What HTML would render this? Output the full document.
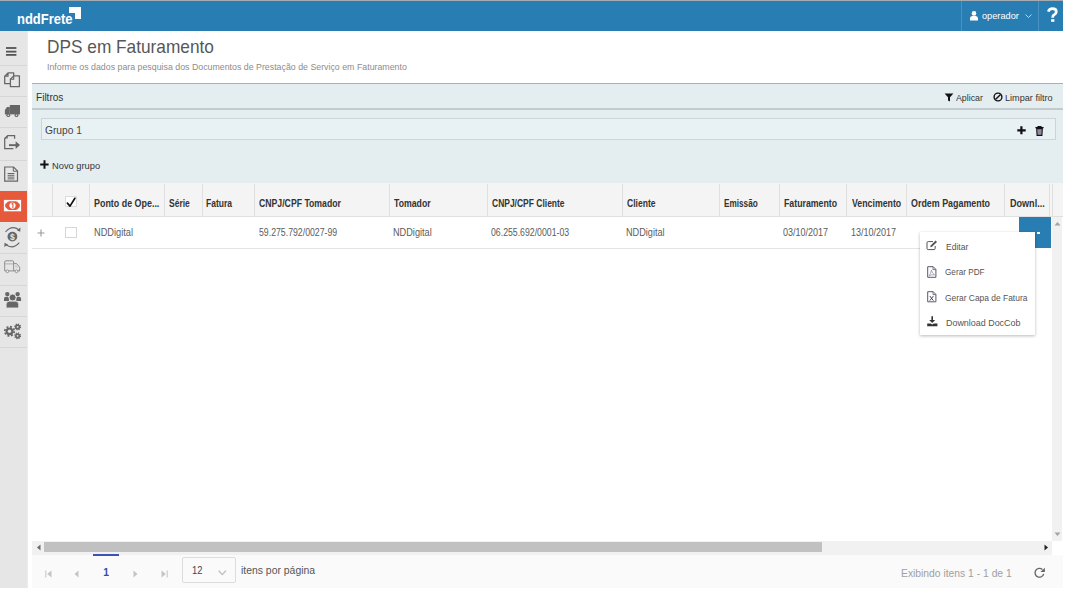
<!DOCTYPE html>
<html><head><meta charset="utf-8"><style>
html,body{margin:0;padding:0;background:#fff;width:1065px;height:592px;overflow:hidden;position:relative;font-family:"Liberation Sans", sans-serif;}
</style></head><body>
<div style="position:absolute;left:0px;top:0px;width:1062.5px;height:1px;background:#a4abb0"></div><div style="position:absolute;left:0px;top:1px;width:1062.5px;height:30px;background:#287db3"></div><div style="position:absolute;left:16.80px;top:11.34px;font-size:15px;line-height:15px;color:#fff;font-weight:700;letter-spacing:0px;white-space:nowrap;transform:scaleX(0.8649);transform-origin:0 0;">nddFrete</div><div style="position:absolute;left:69.4px;top:7.1px;width:5.75px;height:5.5px;background:#fff"></div><div style="position:absolute;left:75.45px;top:7.1px;width:5.55px;height:5.5px;background:#fff"></div><div style="position:absolute;left:75.45px;top:12.9px;width:5.55px;height:6.4px;background:#fff"></div><div style="position:absolute;left:961px;top:1px;width:1px;height:30px;background:#4a92c2"></div><div style="position:absolute;left:1038.3px;top:1px;width:1px;height:30px;background:#4a92c2"></div><svg style="position:absolute;left:969.5px;top:11.2px" width="8" height="9.5" viewBox="0 0 8 9.5"><circle cx="4" cy="2.4" r="2.3" fill="#fff"/><path d="M0 9.5 L0 7.2 Q0 5.2 2.2 5.0 L5.8 5.0 Q8 5.2 8 7.2 L8 9.5 Z" fill="#fff"/></svg><div style="position:absolute;left:982.40px;top:10.66px;font-size:9.8px;line-height:9.8px;color:#fff;font-weight:400;letter-spacing:0px;white-space:nowrap;transform:scaleX(0.9386);transform-origin:0 0;">operador</div><svg style="position:absolute;left:1024.5px;top:13.6px" width="7" height="4.5" viewBox="0 0 7 4.5"><path d="M0.5 0.5 L3.5 3.5 L6.5 0.5" stroke="#cfe0ee" stroke-width="0.9" fill="none"/></svg><svg style="position:absolute;left:1046px;top:7px" width="13" height="15" viewBox="0 0 13 15"><path d="M2.3 4.6 Q3.2 1.7 6.5 1.7 Q10.3 1.7 10.3 4.8 Q10.3 6.8 8.2 7.8 Q6.7 8.6 6.7 10.2 V10.8" fill="none" stroke="#fff" stroke-width="2.7" stroke-linecap="butt"/><rect x="5.1" y="12.2" width="3.3" height="2.6" fill="#fff"/></svg><div style="position:absolute;left:0px;top:31px;width:27.3px;height:556.5px;background:#e6e6e6"></div><div style="position:absolute;left:27.3px;top:31px;width:1px;height:556.5px;background:#ececec"></div><div style="position:absolute;left:0px;top:64.5px;width:27.3px;height:1px;background:#d6d6d6"></div><div style="position:absolute;left:0px;top:96.0px;width:27.3px;height:1px;background:#d6d6d6"></div><div style="position:absolute;left:0px;top:127.0px;width:27.3px;height:1px;background:#d6d6d6"></div><div style="position:absolute;left:0px;top:159.5px;width:27.3px;height:1px;background:#d6d6d6"></div><div style="position:absolute;left:0px;top:252.9px;width:27.3px;height:1px;background:#d6d6d6"></div><div style="position:absolute;left:0px;top:285.0px;width:27.3px;height:1px;background:#d6d6d6"></div><div style="position:absolute;left:0px;top:315.6px;width:27.3px;height:1px;background:#d6d6d6"></div><div style="position:absolute;left:0px;top:347.2px;width:27.3px;height:1px;background:#d6d6d6"></div><div style="position:absolute;left:0px;top:191.2px;width:27.3px;height:30.4px;background:#e65a3b"></div><div style="position:absolute;left:46.95px;top:37.97px;font-size:18.1px;line-height:18.1px;color:#575757;font-weight:400;letter-spacing:0px;white-space:nowrap;transform:scaleX(0.9539);transform-origin:0 0;">DPS em Faturamento</div><div style="position:absolute;left:47.00px;top:62.38px;font-size:9.9px;line-height:9.9px;color:#8c8c8c;font-weight:400;letter-spacing:0px;white-space:nowrap;transform:scaleX(0.8919);transform-origin:0 0;">Informe os dados para pesquisa dos Documentos de Prestação de Serviço em Faturamento</div><div style="position:absolute;left:31.5px;top:82.7px;width:1031.2px;height:100.4px;background:#e4eef1"></div><div style="position:absolute;left:31.5px;top:82.7px;width:1031.2px;height:1.4px;background:#a9aeb1"></div><div style="position:absolute;left:31.5px;top:108.3px;width:1031.2px;height:1.6px;background:#c3cacc"></div><div style="position:absolute;left:35.90px;top:92.76px;font-size:10.4px;line-height:10.4px;color:#333;font-weight:400;letter-spacing:0px;white-space:nowrap;transform:scaleX(0.9683);transform-origin:0 0;">Filtros</div><div style="position:absolute;left:955.80px;top:93.87px;font-size:8.7px;line-height:8.7px;color:#333;font-weight:400;letter-spacing:0px;white-space:nowrap;transform:scaleX(1.0127);transform-origin:0 0;">Aplicar</div><div style="position:absolute;left:1005.40px;top:93.87px;font-size:8.7px;line-height:8.7px;color:#333;font-weight:400;letter-spacing:0px;white-space:nowrap;transform:scaleX(1.0494);transform-origin:0 0;">Limpar filtro</div><div style="position:absolute;left:40.5px;top:118.4px;width:1015.2px;height:22px;background:#e8f1f4;border:1px solid #cdd3d6;box-sizing:border-box"></div><div style="position:absolute;left:45.10px;top:125.06px;font-size:11px;line-height:11px;color:#444;font-weight:400;letter-spacing:0px;white-space:nowrap;transform:scaleX(0.9286);transform-origin:0 0;">Grupo 1</div><div style="position:absolute;left:51.70px;top:160.74px;font-size:9.7px;line-height:9.7px;color:#333;font-weight:400;letter-spacing:0px;white-space:nowrap;transform:scaleX(0.9598);transform-origin:0 0;">Novo grupo</div><div style="position:absolute;left:31.5px;top:183.1px;width:1031px;height:33px;background:#f4f4f4"></div><div style="position:absolute;left:31.5px;top:215.6px;width:1031px;height:1px;background:#e0e0e0"></div><div style="position:absolute;left:51.9px;top:184px;width:1px;height:31.6px;background:#e0e0e0"></div><div style="position:absolute;left:89.0px;top:184px;width:1px;height:31.6px;background:#e0e0e0"></div><div style="position:absolute;left:163.9px;top:184px;width:1px;height:31.6px;background:#e0e0e0"></div><div style="position:absolute;left:201.9px;top:184px;width:1px;height:31.6px;background:#e0e0e0"></div><div style="position:absolute;left:253.8px;top:184px;width:1px;height:31.6px;background:#e0e0e0"></div><div style="position:absolute;left:389.0px;top:184px;width:1px;height:31.6px;background:#e0e0e0"></div><div style="position:absolute;left:487.0px;top:184px;width:1px;height:31.6px;background:#e0e0e0"></div><div style="position:absolute;left:621.8px;top:184px;width:1px;height:31.6px;background:#e0e0e0"></div><div style="position:absolute;left:718.9px;top:184px;width:1px;height:31.6px;background:#e0e0e0"></div><div style="position:absolute;left:779.0px;top:184px;width:1px;height:31.6px;background:#e0e0e0"></div><div style="position:absolute;left:846.3px;top:184px;width:1px;height:31.6px;background:#e0e0e0"></div><div style="position:absolute;left:905.9px;top:184px;width:1px;height:31.6px;background:#e0e0e0"></div><div style="position:absolute;left:1004.2px;top:184px;width:1px;height:31.6px;background:#e0e0e0"></div><div style="position:absolute;left:1049.3px;top:184px;width:1px;height:31.6px;background:#e0e0e0"></div><div style="position:absolute;left:1052.1px;top:184px;width:1px;height:31.6px;background:#e0e0e0"></div><div style="position:absolute;left:94.40px;top:198.61px;font-size:10.1px;line-height:10.1px;color:#333;font-weight:700;letter-spacing:0px;white-space:nowrap;transform:scaleX(0.8825);transform-origin:0 0;">Ponto de Ope...</div><div style="position:absolute;left:168.70px;top:198.61px;font-size:10.1px;line-height:10.1px;color:#333;font-weight:700;letter-spacing:0px;white-space:nowrap;transform:scaleX(0.8414);transform-origin:0 0;">Série</div><div style="position:absolute;left:206.30px;top:198.61px;font-size:10.1px;line-height:10.1px;color:#333;font-weight:700;letter-spacing:0px;white-space:nowrap;transform:scaleX(0.8452);transform-origin:0 0;">Fatura</div><div style="position:absolute;left:258.60px;top:198.61px;font-size:10.1px;line-height:10.1px;color:#333;font-weight:700;letter-spacing:0px;white-space:nowrap;transform:scaleX(0.8611);transform-origin:0 0;">CNPJ/CPF Tomador</div><div style="position:absolute;left:394.40px;top:198.61px;font-size:10.1px;line-height:10.1px;color:#333;font-weight:700;letter-spacing:0px;white-space:nowrap;transform:scaleX(0.8635);transform-origin:0 0;">Tomador</div><div style="position:absolute;left:491.80px;top:198.61px;font-size:10.1px;line-height:10.1px;color:#333;font-weight:700;letter-spacing:0px;white-space:nowrap;transform:scaleX(0.8403);transform-origin:0 0;">CNPJ/CPF Cliente</div><div style="position:absolute;left:626.60px;top:198.61px;font-size:10.1px;line-height:10.1px;color:#333;font-weight:700;letter-spacing:0px;white-space:nowrap;transform:scaleX(0.8461);transform-origin:0 0;">Cliente</div><div style="position:absolute;left:724.00px;top:198.61px;font-size:10.1px;line-height:10.1px;color:#333;font-weight:700;letter-spacing:0px;white-space:nowrap;transform:scaleX(0.8125);transform-origin:0 0;">Emissão</div><div style="position:absolute;left:784.00px;top:198.61px;font-size:10.1px;line-height:10.1px;color:#333;font-weight:700;letter-spacing:0px;white-space:nowrap;transform:scaleX(0.8694);transform-origin:0 0;">Faturamento</div><div style="position:absolute;left:851.50px;top:198.61px;font-size:10.1px;line-height:10.1px;color:#333;font-weight:700;letter-spacing:0px;white-space:nowrap;transform:scaleX(0.8674);transform-origin:0 0;">Vencimento</div><div style="position:absolute;left:911.40px;top:198.61px;font-size:10.1px;line-height:10.1px;color:#333;font-weight:700;letter-spacing:0px;white-space:nowrap;transform:scaleX(0.8808);transform-origin:0 0;">Ordem Pagamento</div><div style="position:absolute;left:1009.50px;top:198.61px;font-size:10.1px;line-height:10.1px;color:#333;font-weight:700;letter-spacing:0px;white-space:nowrap;transform:scaleX(0.8975);transform-origin:0 0;">Downl...</div><div style="position:absolute;left:65.2px;top:196.4px;width:11.4px;height:10.7px;background:#fff;border:1px solid #dcdcdc;box-sizing:border-box"></div><svg style="position:absolute;left:65px;top:196px" width="12" height="12" viewBox="0 0 12 12"><path d="M2.4 7.1 L5.0 10.1 L9.9 2.3" stroke="#111" stroke-width="1.7" fill="none" stroke-linecap="round" stroke-linejoin="round"/></svg><div style="position:absolute;left:31.5px;top:247.6px;width:989px;height:1px;background:#e4e4e4"></div><svg style="position:absolute;left:37.3px;top:228.5px" width="8" height="8" viewBox="0 0 8 8"><path d="M4 0.5 V7.5 M0.5 4 H7.5" stroke="#9a9a9a" stroke-width="1.1"/></svg><div style="position:absolute;left:65.2px;top:226.7px;width:11.5px;height:11.3px;background:#fff;border:1px solid #d6d6d6;box-sizing:border-box"></div><div style="position:absolute;left:93.70px;top:226.80px;font-size:10.6px;line-height:10.6px;color:#5c5c5c;font-weight:400;letter-spacing:0px;white-space:nowrap;transform:scaleX(0.8719);transform-origin:0 0;">NDDigital</div><div style="position:absolute;left:258.60px;top:226.80px;font-size:10.6px;line-height:10.6px;color:#5c5c5c;font-weight:400;letter-spacing:0px;white-space:nowrap;transform:scaleX(0.8246);transform-origin:0 0;">59.275.792/0027-99</div><div style="position:absolute;left:393.40px;top:226.80px;font-size:10.6px;line-height:10.6px;color:#5c5c5c;font-weight:400;letter-spacing:0px;white-space:nowrap;transform:scaleX(0.8652);transform-origin:0 0;">NDDigital</div><div style="position:absolute;left:490.90px;top:226.80px;font-size:10.6px;line-height:10.6px;color:#5c5c5c;font-weight:400;letter-spacing:0px;white-space:nowrap;transform:scaleX(0.8236);transform-origin:0 0;">06.255.692/0001-03</div><div style="position:absolute;left:626.00px;top:226.80px;font-size:10.6px;line-height:10.6px;color:#5c5c5c;font-weight:400;letter-spacing:0px;white-space:nowrap;transform:scaleX(0.8629);transform-origin:0 0;">NDDigital</div><div style="position:absolute;left:783.30px;top:226.80px;font-size:10.6px;line-height:10.6px;color:#5c5c5c;font-weight:400;letter-spacing:0px;white-space:nowrap;transform:scaleX(0.8508);transform-origin:0 0;">03/10/2017</div><div style="position:absolute;left:850.80px;top:226.80px;font-size:10.6px;line-height:10.6px;color:#5c5c5c;font-weight:400;letter-spacing:0px;white-space:nowrap;transform:scaleX(0.8508);transform-origin:0 0;">13/10/2017</div><div style="position:absolute;left:1018.5px;top:216.6px;width:32.6px;height:31.6px;background:#287db3"></div><div style="position:absolute;left:1052.3px;top:216.5px;width:9.6px;height:324.1px;background:#f1f1f1"></div><svg style="position:absolute;left:1054.3px;top:220.6px" width="7" height="5" viewBox="0 0 7 5"><path d="M0.5 4.5 L3.5 1 L6.5 4.5 Z" fill="#a3a3a3"/></svg><svg style="position:absolute;left:1054.3px;top:532px" width="7" height="5" viewBox="0 0 7 5"><path d="M0.5 0.5 L3.5 4 L6.5 0.5 Z" fill="#a3a3a3"/></svg><div style="position:absolute;left:31.5px;top:541.3px;width:1020.5px;height:13.3px;background:#f1f1f1"></div><div style="position:absolute;left:44.3px;top:542.4px;width:777.8px;height:9.6px;background:#c1c1c1"></div><svg style="position:absolute;left:35.5px;top:543.5px" width="5" height="7" viewBox="0 0 5 7"><path d="M4.5 0.5 L1 3.5 L4.5 6.5 Z" fill="#6b6b6b"/></svg><svg style="position:absolute;left:1044px;top:543.5px" width="5" height="7" viewBox="0 0 5 7"><path d="M0.5 0.5 L4 3.5 L0.5 6.5 Z" fill="#222"/></svg><div style="position:absolute;left:31.5px;top:554.6px;width:1031.2px;height:33px;background:#fafafa"></div><div style="position:absolute;left:93px;top:554.4px;width:25.7px;height:1.6px;background:#3f51b5"></div><div style="position:absolute;left:103.30px;top:568.25px;font-size:10.3px;line-height:10.3px;color:#3349b0;font-weight:700;letter-spacing:0px;white-space:nowrap;">1</div><svg style="position:absolute;left:45px;top:569.7px" width="7" height="8" viewBox="0 0 7 8"><path d="M0.8 0.5 V7.5" stroke="#c4c4c4" stroke-width="1"/><path d="M6.5 0.5 L2.2 4 L6.5 7.5 Z" fill="#c4c4c4"/></svg><svg style="position:absolute;left:73.5px;top:569.7px" width="5" height="8" viewBox="0 0 5 8"><path d="M4.5 0.5 L0.5 4 L4.5 7.5 Z" fill="#c4c4c4"/></svg><svg style="position:absolute;left:132.5px;top:569.7px" width="5" height="8" viewBox="0 0 5 8"><path d="M0.5 0.5 L4.5 4 L0.5 7.5 Z" fill="#c4c4c4"/></svg><svg style="position:absolute;left:160.5px;top:569.7px" width="7" height="8" viewBox="0 0 7 8"><path d="M0.5 0.5 L4.8 4 L0.5 7.5 Z" fill="#c4c4c4"/><path d="M6.2 0.5 V7.5" stroke="#c4c4c4" stroke-width="1"/></svg><div style="position:absolute;left:181.5px;top:557.4px;width:54.5px;height:26px;background:#fafafa;border:1px solid #dcdcdc;border-radius:2px;box-sizing:border-box"></div><div style="position:absolute;left:192.00px;top:565.73px;font-size:10.2px;line-height:10.2px;color:#444;font-weight:400;letter-spacing:0px;white-space:nowrap;transform:scaleX(0.9172);transform-origin:0 0;">12</div><svg style="position:absolute;left:218.3px;top:569.8px" width="8.5" height="6" viewBox="0 0 8.5 6"><path d="M0.7 0.8 L4.25 4.6 L7.8 0.8" stroke="#bdbdbd" stroke-width="1.3" fill="none"/></svg><div style="position:absolute;left:240.70px;top:565.05px;font-size:11.5px;line-height:11.5px;color:#555;font-weight:400;letter-spacing:0px;white-space:nowrap;transform:scaleX(0.9049);transform-origin:0 0;">itens por página</div><div style="position:absolute;left:900.50px;top:568.06px;font-size:11px;line-height:11px;color:#a0a0a0;font-weight:400;letter-spacing:0px;white-space:nowrap;transform:scaleX(0.9381);transform-origin:0 0;">Exibindo itens 1 - 1 de 1</div><svg style="position:absolute;left:1033px;top:566px" width="13" height="13" viewBox="0 0 13 13"><path d="M10.7 7.9 A4.4 4.4 0 1 1 9.4 3.5" fill="none" stroke="#666" stroke-width="1.35"/><path d="M7.4 6.1 L11.9 6.1 L11.9 1.7 Z" fill="#666"/></svg><svg style="position:absolute;left:0;top:31px" width="27" height="320" viewBox="0 31 27 320"><rect x="6" y="47.1" width="10.4" height="1.8" fill="#555"/><rect x="6" y="50.75" width="10.4" height="1.8" fill="#555"/><rect x="6" y="54.0" width="10.4" height="1.8" fill="#555"/><path d="M4.7 76.2 L8 72.9 H13.7 V83.7 H4.7 Z M8 72.9 V76.2 H4.7" fill="none" stroke="#666" stroke-width="1.25" stroke-linejoin="round"/><path d="M10.4 79.2 L13.7 75.9 H19.4 V86.7 H10.4 Z" fill="#e6e6e6" stroke="#666" stroke-width="1.25" stroke-linejoin="round"/><path d="M13.7 75.9 V79.2 H10.4" fill="none" stroke="#666" stroke-width="1.1"/><rect x="9.8" y="105" width="10.2" height="9.4" fill="#666"/><path d="M4.9 114.4 V110 L7 107.1 H9.8 V114.4 Z" fill="#666"/><circle cx="8.3" cy="115.2" r="1.9" fill="#666"/><circle cx="16.5" cy="115.2" r="1.9" fill="#666"/><circle cx="8.3" cy="115.2" r="0.8" fill="#e6e6e6"/><circle cx="16.5" cy="115.2" r="0.8" fill="#e6e6e6"/><path d="M14.6 138.7 V135.6 H7.7 L4.7 138.6 V148.7 H13.4" fill="none" stroke="#666" stroke-width="1.25"/><path d="M4.7 138.6 L7.7 135.6 V138.6 Z" fill="#666"/><rect x="9" y="144.2" width="7.5" height="1.9" fill="#666"/><path d="M15.6 141.2 L20 145.1 L15.6 149 Z" fill="#666"/><path d="M4.7 167 H13.6 L17.5 170.9 V181.2 H4.7 Z" fill="none" stroke="#666" stroke-width="1.2"/><path d="M13.3 167 V171.2 H17.5" fill="none" stroke="#666" stroke-width="1"/><rect x="7.6" y="173" width="6.8" height="1" fill="#666"/><rect x="7.6" y="174.8" width="6.8" height="1" fill="#666"/><rect x="7.6" y="176.6" width="6.8" height="1" fill="#666"/><rect x="7.6" y="178.4" width="6.8" height="1" fill="#666"/><rect x="3.9" y="199.9" width="17.2" height="11.4" fill="#fff"/><path d="M5 205.6 Q5.2 203.4 6.6 203 Q7.4 201.3 9.4 201.3 H15.6 Q17.6 201.3 18.4 203 Q19.8 203.4 20 205.6 Q19.8 207.8 18.4 208.2 Q17.6 209.9 15.6 209.9 H9.4 Q7.4 209.9 6.6 208.2 Q5.2 207.8 5 205.6 Z" fill="#e65a3b"/><circle cx="12.5" cy="205.6" r="3.1" fill="#fff"/><path d="M11.6 204.3 L12.9 203.4 V207.9" stroke="#e65a3b" stroke-width="1.1" fill="none"/><circle cx="12.4" cy="236.6" r="4.9" fill="#666"/><text x="12.4" y="239.7" font-family="Liberation Sans" font-size="8.5" font-weight="700" fill="#e6e6e6" text-anchor="middle">$</text><path d="M5.5 232 Q12 224.5 19 230" fill="none" stroke="#666" stroke-width="1.1"/><path d="M20.5 227.6 L20.2 231.8 L16.8 230.2 Z" fill="#666"/><path d="M19.3 242.6 Q12.8 250 5.8 244.5" fill="none" stroke="#666" stroke-width="1.1"/><path d="M4.3 247 L4.6 242.8 L8 244.4 Z" fill="#666"/><path d="M4.7 270.9 V262 Q4.7 260.8 5.9 260.8 H12.4 Q13.6 260.8 13.6 262 V270.9 Z" fill="none" stroke="#8a8a8a" stroke-width="0.95"/><path d="M4.7 263.9 H13.6" stroke="#9a9a9a" stroke-width="0.7"/><path d="M13.6 263.6 H16.6 L19.6 267.2 V270.9 H13.6" fill="none" stroke="#8a8a8a" stroke-width="0.95"/><path d="M15.2 265.2 H16.4 L18.2 267.6 H15.2 Z" fill="#a8b8c8" opacity="0.6"/><circle cx="7.4" cy="271.3" r="1.35" fill="#f2f2f2" stroke="#8a8a8a" stroke-width="0.9"/><circle cx="16.5" cy="271.3" r="1.35" fill="#f2f2f2" stroke="#8a8a8a" stroke-width="0.9"/><circle cx="7.3" cy="294.1" r="2.2" fill="#666"/><circle cx="17.6" cy="294.1" r="2.2" fill="#666"/><path d="M4 300.9 V298.8 Q4 296.7 6.1 296.7 H7.6 Q8.9 296.7 8.9 298.8 V300.9 Z M16.3 300.9 V298.8 Q16.3 296.7 17.6 296.7 H19 Q21.1 296.7 21.1 298.8 V300.9 Z" fill="#666"/><circle cx="12.6" cy="297.5" r="3.5" fill="#666" stroke="#e6e6e6" stroke-width="0.9"/><path d="M6.2 307.9 V304.4 Q6.2 301.2 9.4 301.2 H15.4 Q18.6 301.2 18.6 304.4 V307.9 Z" fill="#666" stroke="#e6e6e6" stroke-width="0.7"/><circle cx="9.5" cy="331.3" r="3.9" fill="#666"/><circle cx="9.5" cy="331.3" r="4.7" fill="none" stroke="#666" stroke-width="1.7" stroke-dasharray="1.95 1.74"/><circle cx="9.5" cy="331.3" r="1.7" fill="#e6e6e6"/><circle cx="17.6" cy="326.9" r="1.75" fill="none" stroke="#666" stroke-width="1.7"/><circle cx="17.6" cy="326.9" r="2.9" fill="none" stroke="#666" stroke-width="1.2" stroke-dasharray="1.15 1.13"/><circle cx="17.6" cy="335.8" r="1.75" fill="none" stroke="#666" stroke-width="1.7"/><circle cx="17.6" cy="335.8" r="2.9" fill="none" stroke="#666" stroke-width="1.2" stroke-dasharray="1.15 1.13"/></svg><svg style="position:absolute;left:944px;top:93px" width="10" height="9" viewBox="0 0 10 9"><path d="M0.6 0.6 H9.4 L6 4.2 V8.6 L4 7.4 V4.2 Z" fill="#111"/></svg><svg style="position:absolute;left:992.5px;top:92.2px" width="10" height="10" viewBox="0 0 10 10"><circle cx="5" cy="5" r="3.9" fill="none" stroke="#111" stroke-width="1.4"/><path d="M2.4 7.6 L7.6 2.4" stroke="#111" stroke-width="1.4"/></svg><svg style="position:absolute;left:1016.5px;top:125.8px" width="9" height="9" viewBox="0 0 9 9"><path d="M4.4 0.2 V8.3 M0.3 4.3 H8.7" stroke="#111" stroke-width="2.2"/></svg><svg style="position:absolute;left:1035px;top:125.5px" width="9" height="10" viewBox="0 0 9 10"><path d="M0.4 1.6 H8.6 M3 1.6 V0.6 H6 V1.6" stroke="#111" stroke-width="1.1" fill="none"/><path d="M1.7 2.6 H7.3 L6.9 9.4 H2.1 Z" fill="#a096b2" stroke="#111" stroke-width="1.1"/><path d="M3.8 3.6 V8.6 M5.2 3.6 V8.6" stroke="#7a6e90" stroke-width="0.5"/></svg><svg style="position:absolute;left:40.3px;top:159.8px" width="9" height="9" viewBox="0 0 9 9"><path d="M4.5 0.2 V8.8 M0.2 4.5 H8.6" stroke="#111" stroke-width="2"/></svg><div style="position:absolute;left:1037px;top:232px;width:2.8px;height:2.4px;background:#fff"></div><div style="position:absolute;left:920.4px;top:231.7px;width:114.8px;height:103.3px;background:#fff;box-shadow:0 1px 3px rgba(0,0,0,0.28)"></div><svg style="position:absolute;left:926px;top:240px" width="12" height="11" viewBox="0 0 12 11"><path d="M7 1.6 H2.2 Q1 1.6 1 2.8 V8.6 Q1 9.6 2.2 9.6 H8 Q9.2 9.6 9.2 8.4 V6" fill="none" stroke="#555" stroke-width="1"/><path d="M4.2 7.2 L4.6 5.4 L9.6 0.6 L11 2 L6 6.8 Z" fill="#555"/></svg><svg style="position:absolute;left:926.5px;top:265.5px" width="10" height="12" viewBox="0 0 10 12"><path d="M0.7 0.7 H6.2 L8.9 3.4 V11.3 H0.7 Z" fill="none" stroke="#5e566e" stroke-width="1"/><path d="M6 0.7 V3.6 H8.9" fill="none" stroke="#5e566e" stroke-width="0.8"/><path d="M2.2 9.8 Q4 6.8 4.4 4.2 Q5.2 7.4 7.6 8.8 Q4.4 8.4 2.2 9.8 Z" fill="none" stroke="#8a7f98" stroke-width="0.7"/></svg><svg style="position:absolute;left:926.5px;top:290.5px" width="10" height="12" viewBox="0 0 10 12"><path d="M0.7 0.7 H6.2 L8.9 3.4 V10.8 H0.7 Z" fill="none" stroke="#5e566e" stroke-width="1"/><path d="M6 0.7 V3.6 H8.9" fill="none" stroke="#5e566e" stroke-width="0.8"/><path d="M2.8 5 L6.4 9.6 M6.4 5 L2.8 9.6" stroke="#3a3448" stroke-width="0.9"/></svg><svg style="position:absolute;left:926.5px;top:316.3px" width="11" height="10.5" viewBox="0 0 11 10.5"><path d="M5.2 0.3 V5.4" stroke="#333" stroke-width="1.6"/><path d="M2.2 4 L5.2 7 L8.2 4 Z" fill="#333"/><path d="M0.2 7.4 H3.6 L5.2 8.6 L6.8 7.4 H10.4 V10.2 H0.2 Z" fill="#333"/></svg><div style="position:absolute;left:946.40px;top:241.91px;font-size:9.5px;line-height:9.5px;color:#555;font-weight:400;letter-spacing:0px;white-space:nowrap;transform:scaleX(0.9005);transform-origin:0 0;">Editar</div><div style="position:absolute;left:944.80px;top:267.11px;font-size:9.5px;line-height:9.5px;color:#555;font-weight:400;letter-spacing:0px;white-space:nowrap;transform:scaleX(0.8608);transform-origin:0 0;">Gerar PDF</div><div style="position:absolute;left:944.80px;top:293.01px;font-size:9.5px;line-height:9.5px;color:#555;font-weight:400;letter-spacing:0px;white-space:nowrap;transform:scaleX(0.8863);transform-origin:0 0;">Gerar Capa de Fatura</div><div style="position:absolute;left:945.70px;top:318.21px;font-size:9.5px;line-height:9.5px;color:#555;font-weight:400;letter-spacing:0px;white-space:nowrap;transform:scaleX(0.9401);transform-origin:0 0;">Download DocCob</div>
</body></html>
